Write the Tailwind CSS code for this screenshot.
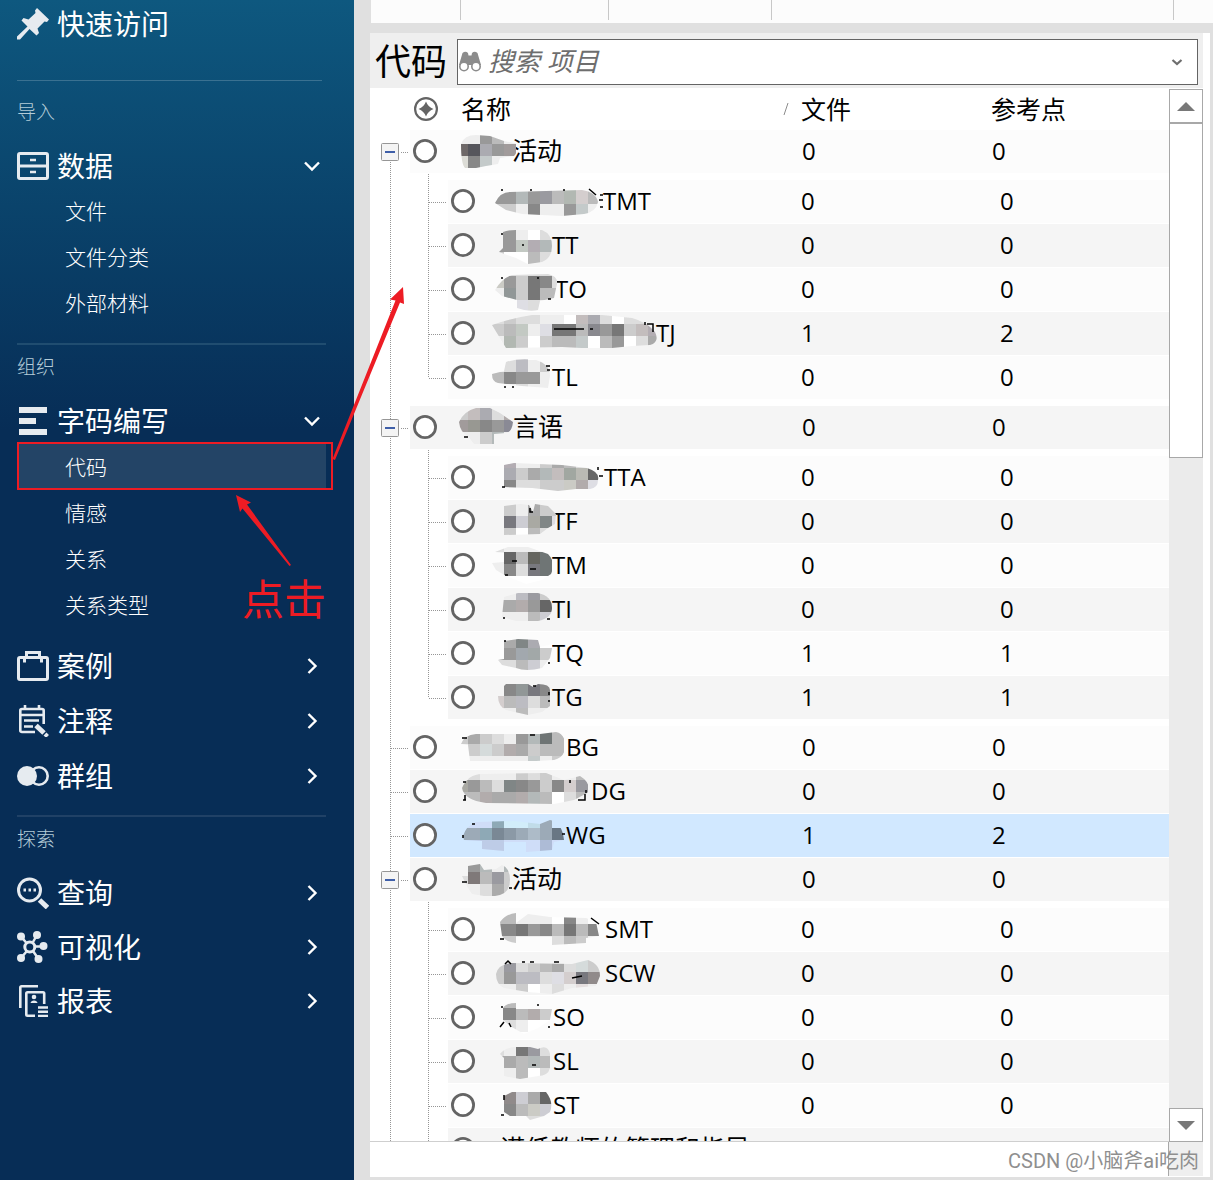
<!DOCTYPE html>
<html lang="zh-CN">
<head>
  <meta charset="UTF-8" />
  <meta name="viewport" content="width=device-width, initial-scale=1.0" />
  <title>代码</title>
  <script src="https://cdn.jsdelivr.net/npm/@tailwindcss/browser@4"></script>
</head>
<body class="relative flex h-screen overflow-hidden bg-[#e0e0e0] font-['Open_Sans','Noto_Sans_CJK_SC',sans-serif] text-black">

  <!-- Sidebar -->
  <aside class="w-[354px] shrink-0 bg-linear-to-b from-[#0e587f] to-[#072d56] to-[430px] pl-[17px] pr-7 text-white">
    <a href="#" class="flex h-12 items-center gap-2 text-[28px]">
      <svg class="size-8" viewBox="0 0 32 32" fill="#e6ebf0"><path d="M20 0 32 11.500 30 14 27.500 13.500 20.500 20.500 22 25 19.500 27.500 12.500 21 3 31.500H0V28.500L10.500 18.500 4.500 12.500 6.500 10 11.500 11.500 18.500 5 18 2.500Z"/></svg>
      快速访问
    </a>

    <hr class="mt-8 mr-1 border-[#3a7191]" />
    <h2 class="mt-[17px] h-7 text-[19px] leading-7 font-light text-[#b4ccd8]">导入</h2>
    <a href="#" class="mt-[17px] flex h-[45px] items-center gap-2 text-[28px]">
      <svg class="size-8" viewBox="0 0 32 32" fill="none" stroke="#e6ebf0" stroke-width="3"><rect x="1.500" y="3.500" width="29" height="25" rx="1.500"/><path d="M2 16H30"/><path d="M13 10h6M13 22h6" stroke-width="2.500"/></svg>
      <span class="flex-1">数据</span>
      <svg class="mr-1.5 size-4" viewBox="0 0 16 16" fill="none" stroke="white" stroke-width="2.400"><path d="M1 4.500 8 11.500 15 4.500"/></svg>
    </a>
    <ul class="text-[21px] leading-[46px] font-light text-white">
      <li><a href="#" class="block pl-12">文件</a></li>
      <li><a href="#" class="block pl-12">文件分类</a></li>
      <li><a href="#" class="block pl-12">外部材料</a></li>
    </ul>

    <hr class="mt-[17px] border-t-2 border-[#204d70]" />
    <h2 class="mt-2 h-7 text-[19px] leading-7 font-light text-[#b4ccd8]">组织</h2>
    <a href="#" class="mt-[17px] flex h-[46px] items-center gap-2 text-[28px]">
      <svg class="size-8" viewBox="0 0 32 32" fill="#e6ebf0"><path d="M2 2H30V8H2ZM2 13H19V19H2ZM2 24H30V30H2Z"/></svg>
      <span class="flex-1">字码编写</span>
      <svg class="mr-1.5 size-4" viewBox="0 0 16 16" fill="none" stroke="white" stroke-width="2.400"><path d="M1 4.500 8 11.500 15 4.500"/></svg>
    </a>
    <ul class="text-[21px] leading-[46px] font-light text-white">
      <li><a href="#" class="block bg-[#234466] pl-12">代码</a></li>
      <li><a href="#" class="block pl-12">情感</a></li>
      <li><a href="#" class="block pl-12">关系</a></li>
      <li><a href="#" class="block pl-12">关系类型</a></li>
    </ul>
    <div class="mt-2.5 text-[28px]">
      <a href="#" class="flex h-[55px] items-center gap-2">
        <svg class="size-8" viewBox="0 0 32 32" fill="none" stroke="#e6ebf0" stroke-width="3"><rect x="1.500" y="7.500" width="29" height="22" rx="1.500"/><path d="M7.500 12.500V9M24.500 12.500V9M9.500 7V2.500H22.500V7"/></svg>
        <span class="flex-1">案例</span>
        <svg class="mr-1.5 size-4" viewBox="0 0 16 16" fill="none" stroke="white" stroke-width="2.400"><path d="M4.500 1 11.500 8 4.500 15"/></svg>
      </a>
      <a href="#" class="flex h-[55px] items-center gap-2">
        <svg class="size-8" viewBox="0 0 32 32" fill="none" stroke="#e6ebf0" stroke-width="2.600"><path d="M18 27H5Q3.300 27 3.300 25.500V5.500Q3.300 4 5 4H25Q26.700 4 26.700 5.500V19M8 0V5M22 0V5M3 10H27M7 15.500H22M7 21.500H16"/><path d="M19 20.500 27 28" stroke-width="5"/><path d="M28 29 30.500 31.500" stroke-width="4"/></svg>
        <span class="flex-1">注释</span>
        <svg class="mr-1.5 size-4" viewBox="0 0 16 16" fill="none" stroke="white" stroke-width="2.400"><path d="M4.500 1 11.500 8 4.500 15"/></svg>
      </a>
      <a href="#" class="flex h-[55px] items-center gap-2">
        <svg class="size-8" viewBox="0 0 32 32"><circle cx="22" cy="16" r="8.700" fill="none" stroke="#e6ebf0" stroke-width="2.600"/><circle cx="10" cy="16" r="10" fill="#e6ebf0"/></svg>
        <span class="flex-1">群组</span>
        <svg class="mr-1.5 size-4" viewBox="0 0 16 16" fill="none" stroke="white" stroke-width="2.400"><path d="M4.500 1 11.500 8 4.500 15"/></svg>
      </a>
    </div>

    <hr class="mt-3 border-t-2 border-[#204166]" />
    <h2 class="mt-2 h-7 text-[19px] leading-7 font-light text-[#b4ccd8]">探索</h2>
    <div class="mt-[13px] text-[28px]">
      <a href="#" class="flex h-[54px] items-center gap-2">
        <svg class="size-8" viewBox="0 0 32 32" fill="none" stroke="#e6ebf0"><circle cx="12.500" cy="13" r="11" stroke-width="3"/><path d="M22.500 23 30.500 30.500" stroke-width="5"/><path d="M6.500 13H9M11.500 13H14M16.500 13H19" stroke-width="3"/></svg>
        <span class="flex-1">查询</span>
        <svg class="mr-1.5 size-4" viewBox="0 0 16 16" fill="none" stroke="white" stroke-width="2.400"><path d="M4.500 1 11.500 8 4.500 15"/></svg>
      </a>
      <a href="#" class="flex h-[54px] items-center gap-2">
        <svg class="size-8" viewBox="0 0 32 32" fill="#e6ebf0" stroke="#e6ebf0" stroke-width="2.500"><path d="M4 5.500 9.500 12M20 4 16 11M18 15.500H26M9.500 20.500 4 27M16 20 21.500 28" fill="none"/><g stroke="none"><circle cx="4" cy="5.500" r="4"/><circle cx="20" cy="4" r="4"/><circle cx="26.500" cy="15" r="4"/><circle cx="4" cy="27" r="4"/><circle cx="21.500" cy="28" r="4"/></g><circle cx="12.800" cy="16" r="5" fill="#072d56" stroke-width="3"/></svg>
        <span class="flex-1">可视化</span>
        <svg class="mr-1.5 size-4" viewBox="0 0 16 16" fill="none" stroke="white" stroke-width="2.400"><path d="M4.500 1 11.500 8 4.500 15"/></svg>
      </a>
      <a href="#" class="flex h-[54px] items-center gap-2">
        <svg class="size-8" viewBox="0 0 32 32" fill="none" stroke="#e6ebf0" stroke-width="2.600"><path d="M3.300 23V2.500Q3.300 1.300 4.500 1.300H21"/><path d="M18 30.700H10.500Q9.300 30.700 9.300 29.500V8.500Q9.300 7.300 10.500 7.300H26Q27.200 7.300 27.200 8.500V19"/><path d="M21 22.500H31M21 26.700H31M21 31H31" stroke-width="2.400"/><circle cx="17" cy="12" r="2.300" fill="#e6ebf0" stroke="none"/><path d="M13.500 18Q14 15.500 17 15.500T20.500 18Z" fill="#e6ebf0" stroke="none"/></svg>
        <span class="flex-1">报表</span>
        <svg class="mr-1.5 size-4" viewBox="0 0 16 16" fill="none" stroke="white" stroke-width="2.400"><path d="M4.500 1 11.500 8 4.500 15"/></svg>
      </a>
    </div>
  </aside>

  <!-- Content -->
  <main class="flex min-w-0 flex-1 flex-col pl-4">
    <div class="ml-px flex h-[23px] shrink-0 bg-[#fcfcfc]">
      <div class="h-5 w-[90px] border-r border-[#c8c8c8]"></div>
      <div class="h-5 w-[148px] border-r border-[#c8c8c8]"></div>
      <div class="h-5 w-[163px] border-r border-[#c8c8c8]"></div>
      <div class="mr-[39px] h-5 flex-1 border-r border-[#c8c8c8]"></div>
    </div>

    <section class="mt-2.5 mr-[3px] mb-[3px] flex min-h-0 flex-1 flex-col bg-white pr-[7px]">
      <div class="flex h-[55px] shrink-0 items-center gap-[9px] bg-[#efefef] px-[5px] pt-0.5">
        <label for="search" class="w-[73px] text-[36px] leading-none whitespace-nowrap">代码</label>
        <div class="flex h-[46px] flex-1 items-center border border-[#646464] bg-white pr-3.5 pl-px">
          <svg class="h-[22px] w-[22px]" viewBox="0 0 22 22" fill="#8c8c8c"><path d="M3.500 2Q6.500-0.500 9 2L9.500 4.500H12.500L13 2Q15.500-0.500 18.500 2L22 14H0Z"/><circle cx="5" cy="15.500" r="4.200" fill="white" stroke="#8c8c8c" stroke-width="1.600"/><circle cx="17" cy="15.500" r="4.200" fill="white" stroke="#8c8c8c" stroke-width="1.600"/></svg>
          <input id="search" type="text" placeholder="搜索 项目" class="ml-[7px] min-w-0 flex-1 text-[26px] italic outline-none placeholder:text-[#6e6e6e]" />
          <button type="button" aria-label="展开">
            <svg class="size-3" viewBox="0 0 12 12" fill="none" stroke="#6e6e6e" stroke-width="2.200"><path d="M1.500 4 6 8 10.500 4"/></svg>
          </button>
        </div>
      </div>

      <div class="flex min-h-0 flex-1">
        <div class="min-w-0 flex-1 overflow-hidden border-b border-[#cfcfcf]">
          <table class="w-full table-fixed border-collapse text-left text-[25px] leading-none">
            <colgroup>
              <col class="w-[431px]" />
              <col class="w-[190px]" />
              <col />
            </colgroup>
            <thead>
              <tr class="h-[42px]">
                <th class="p-0 font-normal">
                  <div class="flex items-center pr-3 pl-11">
                    <svg class="size-6" viewBox="0 0 24 24"><circle cx="12" cy="12" r="10.900" fill="none" stroke="#646464" stroke-width="2.200"/><path d="M12 4.500Q14 10 19.500 12 14 14 12 19.500 10 14 4.500 12 10 10 12 4.500Z" fill="#646464"/></svg>
                    <span class="ml-[23px] flex-1">名称</span>
                    <svg class="h-3 w-1.5" viewBox="0 0 6 12" stroke="#8c8c8c"><path d="M1 12 5 0"/></svg>
                  </div>
                </th>
                <th class="p-0 font-normal">文件</th>
                <th class="p-0 font-normal">参考点</th>
              </tr>
            </thead>
            <tbody id="codeRows"></tbody>
          </table>
        </div>

        <!-- Scrollbar -->
        <div class="flex w-[34px] flex-col pt-px">
          <div class="flex min-h-0 flex-1 flex-col bg-[#ebebeb]">
            <button type="button" aria-label="向上" class="flex h-[34px] shrink-0 items-center justify-center border border-[#a8a8a8] bg-white">
              <svg class="h-[9px] w-[18px]" viewBox="0 0 18 9" fill="#787878"><path d="M9 0 18 9H0Z"/></svg>
            </button>
            <div class="h-[335px] border border-[#a8a8a8] bg-white"></div>
            <button type="button" aria-label="向下" class="mt-auto flex h-[34px] shrink-0 items-center justify-center border border-[#a8a8a8] bg-white">
              <svg class="h-[9px] w-[18px]" viewBox="0 0 18 9" fill="#787878"><path d="M0 0H18L9 9Z"/></svg>
            </button>
          </div>
        </div>
      </div>
      <div class="flex h-[35px] shrink-0 justify-end">
        <div class="mb-px w-[35px] border-l border-[#a8a8a8] bg-[#efefef]"></div>
      </div>
    </section>
  </main>

  <!-- Annotations -->
  <div class="absolute top-[442px] left-[17px] h-12 w-[316px] border-2 border-[#ed1c24]"></div>
  <svg class="pointer-events-none absolute top-0 left-0 h-[600px] w-[420px]" viewBox="0 0 420 600" fill="#ed1c24">
    <path d="M403 287 404 304 400 302.500 335 460 332.500 459 395.500 300.500 390 299.500Z"/>
    <path d="M236 495 251 502.500 247 504.500 291 565 289.500 566 242.500 508.500 240 512Z"/>
  </svg>
  <p class="absolute top-[577px] left-[242px] text-[42px] leading-[44px] text-[#ed1c24]">点击</p>
  <p class="absolute right-3.5 bottom-1 font-['Roboto','Noto_Sans_CJK_SC',sans-serif] text-[20px] leading-[30px] text-[#8f8f8f]">CSDN @小脑斧ai吃肉</p>

  <script>
    // w: width of the blurred part, clip: its outline, marks: ink left visible around it
    // y: top of the first line of 12px cells, cells: one string per line
    const codes = [
      { level: 0, text: '活动', files: 0, refs: 0, parent: true, first: true, w: 56, y: 2,
        clip: 'M5 14Q8 5 20 5L34 6 48 11 62 14Q62 22 58 26L44 28 42 34 30 36 20 38H9Q5 34 5 14Z',
        cells: ['eee eee 999 bbb eee', '766 556 aab 999 a99', 'ddc 888 bcc eee eee'] },
      { level: 1, text: 'TMT', files: 0, refs: 0, w: 111, y: 0,
        clip: 'M3 23Q8 12 18 12L90 10Q104 12 106 22 104 32 92 34L70 36 30 34 14 30Z',
        marks: 'M9 10h2M38 10h2M71 10h2M97 9 104 15M108 15h3M107 20h4M108 27h3',
        cells: ['999 999 abb 999 99a bbb aba dcc bbb', '999 999 abb 999 99a bbb aba dcc bbb', 'ccc ccc eee 888 eee eee 999 bcc eee'] },
      { level: 1, text: 'TT', files: 0, refs: 0, w: 60, y: 4,
        clip: 'M11 8Q16 6 24 6L50 6Q60 10 60 22 60 34 50 38L36 40 24 34 7 28 11 24Z',
        marks: 'M9 10h2M30 21h2',
        cells: ['999 999 eee fff ddd', '999 999 bcb bab abb', 'ccc fff fff bbb ddd'] },
      { level: 1, text: 'TO', files: 0, refs: 0, w: 63, y: -4,
        clip: 'M3 22Q10 10 20 7L56 6Q66 8 65 16L62 30 48 33 46 42Q36 44 25 40V32L10 28Z',
        marks: 'M9 10h2M45 10h2M56 31h3',
        cells: ['ddd ddd ddd ddd ddd eee', 'ccb 999 ccc 777 888 ddd', 'eee 899 ccc 777 bbb bbb', 'eee eee dde ddd eee eee'] },
      { level: 1, text: 'TJ', files: 1, refs: 2, w: 164, y: 0,
        clip: 'M0 13Q20 6 40 3H110L140 6Q155 10 163 20 168 30 158 33L140 34 110 37 70 35 14 36Z',
        marks: 'M62 17H92M98 17H101M153 10V13M155 12H161V20',
        cells: ['ddd ccc ddd ddd eee eee fff cbb aab ddd fff ddd ddd', 'ccc bbb bcb eee dde 777 777 bbb 889 999 777 ccc cbb bab', 'eee aba ccc fff ccc bbb bbb bcc fff bbb 999 fff ddd aaa'] },
      { level: 1, text: 'TL', files: 0, refs: 0, last: true, w: 60, y: -8,
        clip: 'M0 18 12 15 14 6Q26 2 44 4 58 8 58 20L56 32 30 30 6 27Q0 26 0 18Z',
        marks: 'M12 31h2M20 31h2M54 10h4M55 14h3',
        cells: ['eee ddd bbc fff ddd', 'eee ddd bbc eee ccc', 'bbb 888 999 999 eee', 'fff eee ddd eee eee'] },
      { level: 0, text: '言语', files: 0, refs: 0, parent: true, w: 57, y: 2,
        clip: 'M3 16Q8 5 20 2L34 2 44 7 57 16Q56 26 50 27L38 28V38H18L12 30Q4 26 3 16Z',
        marks: 'M8 31h4',
        cells: ['ccc cbb aab ddd baa eee', 'a99 998 888 999 88a bbb', 'eee eee ccc abb eee eee'] },
      { level: 1, text: 'TTA', files: 0, refs: 0, w: 112, y: 0,
        clip: 'M12 9 22 7 70 9 95 12Q108 16 106 24 106 32 98 33L84 33 66 35 40 32 12 31Z',
        marks: 'M10 31h3M106 11v3M107 20h4',
        cells: ['bbb bab eee eee ccc aaa bbb ddd eee', 'aab aab ccc aaa abb cbb 9a9 bba 666', '888 888 ddd ddd ccc ccc ccb baa dde'] },
      { level: 1, text: 'TF', files: 0, refs: 0, w: 60, y: 4,
        clip: 'M12 6 28 4 37 5 41 12 43 4 56 6 64 14 63 24 56 28 48 34 12 35Z',
        marks: 'M38 8v4h3',
        cells: ['ccc ccc eee aaa ccc ccc', '778 778 ccd aa9 788 dde', 'ccc ccc fff bbb ddd eee'] },
      { level: 1, text: 'TM', files: 0, refs: 0, w: 60, y: -4,
        clip: 'M3 8 16 3 36 3 56 10Q64 18 59 30L50 36 34 40 14 32 4 26 0 19 12 18V9Z',
        marks: 'M20 17h5M13 31h3M38 25h6',
        cells: ['ddd eee eee eee eee', 'eee 666 bbb 665 677', 'eee 888 ddd 778 677', 'fff fff fff fff fff'] },
      { level: 1, text: 'TI', files: 0, refs: 0, w: 60, y: 0,
        clip: 'M12 9 26 5 46 5Q60 8 60 20 60 30 46 33L24 33 10 29Z',
        marks: 'M11 30h2M55 31h3',
        cells: ['eee eee bbc 99a ccc', 'aaa aaa baa 999 666', 'eee eee eee bbb ccd'] },
      { level: 1, text: 'TQ', files: 1, refs: 1, w: 60, y: -8,
        clip: 'M12 9 26 7 46 8 48 15 61 12 58 26 50 36Q34 40 24 36L10 33 6 28 12 27Z',
        marks: 'M12 9h2M56 31h2',
        cells: ['aaa aaa 788 abb eee', 'aaa aaa 788 aab fff', '999 999 9ab 9aa ccc', 'ddd ddd bbb ccd eee'] },
      { level: 1, text: 'TG', files: 1, refs: 1, last: true, w: 60, y: -4,
        clip: 'M12 10 14 8H36L41 11 46 8Q58 8 58 14V30L50 36 36 39 14 34Q6 30 6 20H12Z',
        marks: 'M41 10h3M57 16v3M57 24v2',
        cells: ['888 888 899 778 888', '888 888 899 778 888', 'dcc bbb bbc ddd bbb', 'eee eee bbb eee eee'] },
      { level: 0, text: 'BG', files: 0, refs: 0, first: true, w: 110, y: 6,
        clip: 'M5 18Q8 9 20 8H84L100 6Q110 8 109 22 108 32 98 34L80 35H14L12 19Z',
        marks: 'M6 12h5M74 9h5',
        cells: ['ccc aaa ccc ddd eee 999 abb 677 bbb', 'eee ccc cdd ccc baa aaa ccc bbb bbb', 'eee eee eee eee eee eee bcc eee ccc'] },
      { level: 0, text: 'DG', files: 0, refs: 0, w: 135, y: -2,
        clip: 'M6 18Q12 4 26 4L90 3 108 10 124 6Q134 12 133 22L118 30 98 34 30 33Q8 30 6 18Z',
        marks: 'M7 12h3M7 30h3M9 25v5M114 10v3M122 30h7V24M130 20v3',
        cells: ['eee ddd eee eee eee ccc ddd ccc eee eee bbb', 'aa9 999 bbb ddd 788 888 999 ccc 888 dcc 99a', 'bbb bbb baa aaa aaa baa abb bbb fff ddd bbb'] },
      { level: 0, text: 'WG', files: 1, refs: 2, selected: true, w: 110, y: 2,
        clip: 'M7 22Q10 12 20 8L58 7 84 10 94 6Q106 8 108 26L98 28 96 36 70 38V28H48V37L26 35V27L8 26Z',
        marks: 'M7 21v3M16 10h3M106 20h3',
        cells: ['bde cdf cdf 8ab cef cef bde 9ab', '9ab 9ab 8ab 789 89a 9ab abc 9ab 678', 'bce bce bce bce cdf cdf cdf abd cdf'] },
      { level: 0, text: '活动', files: 0, refs: 0, parent: true, w: 56, y: 2,
        clip: 'M12 8 24 6 28 12 40 11 46 7Q54 10 54 22 54 34 44 37L34 39 16 36 12 30 6 18 12 18Z',
        marks: 'M6 24h5M53 30h3',
        cells: ['999 999 abb eee abb', 'ddd 877 bbb 99a ccc', 'eee eee ddd aaa ccc'] },
      { level: 1, text: 'SMT', files: 0, refs: 0, w: 113, y: 4,
        clip: 'M8 14Q14 6 24 5V15L36 6 58 9 94 10 104 14 107 28 94 30V35L60 37V29H24V35Q14 34 10 28Z',
        marks: 'M8 31h4M99 10 107 16',
        cells: ['bbb bbb eee eee eee fff 888 eee', '888 888 777 999 888 bbb 777 bbb 888', 'ccc ccc eee eee eee ddd bbb ccc eee'] },
      { level: 1, text: 'SCW', files: 0, refs: 0, w: 113, y: -4,
        clip: 'M4 22Q6 12 20 11L80 12 96 8Q108 12 108 24L104 34 80 36 60 42 36 40 12 36Q4 32 4 22Z',
        marks: 'M13 12 16 9 19 12M30 10h3M38 10h4M62 10h5M80 26 90 24',
        cells: ['ccc 99a ddd ccc bbb aaa ddd cdd ccc', 'ccc 99a ddd ccc bbb aaa ddd cdd ccc', 'ccc 999 bbc bbc ddd dde dcc 778 988', 'eee eee ccc fff eee ddd eee edd eee'] },
      { level: 1, text: 'SO', files: 0, refs: 0, w: 61, y: 0,
        clip: 'M11 12Q14 7 24 7V13H60L58 24 46 32 32 38 18 30 11 24Z',
        marks: 'M9 11h2M8 31 12 26M17 27 19 31M45 9h2M56 31h2',
        cells: ['bbb bbb eee eee eee', '888 888 bbb baa ccc', 'ddd ddd eee fff fff', 'fff fff fff fff fff'] },
      { level: 1, text: 'SL', files: 0, refs: 0, w: 61, y: -8,
        clip: 'M8 14Q12 8 22 7L38 7 46 9Q56 4 58 14V28Q56 36 46 36L28 39 12 36V18Z',
        marks: 'M40 25h4',
        cells: ['ddd ddd 777 99a ddd', 'ddd eee 777 99a ddd', 'aaa aaa bbb abb bbb', 'eee eee bbb fff ddd'] },
      { level: 1, text: 'ST', files: 0, refs: 0, w: 61, y: -4,
        clip: 'M12 12 20 8H54Q62 18 58 28L52 32 38 36 34 32H18L12 28Z',
        marks: 'M12 11v5M9 31h3',
        cells: ['eee eee eee eee eee', '988 988 ccd aaa 666', '888 888 bbb ccb ccd', 'ddd ddd ddd ddd ddd'] },
      { level: 1, text: '谨低教师的管理和指导SF', files: 0, refs: 0, w: 8, y: 0, clip: '', cells: [] },
    ];

    const ring = '<svg class="size-6 shrink-0" viewBox="0 0 24 24"><circle cx="12" cy="12" r="10.600" fill="white" stroke="#646464" stroke-width="2.800"/></svg>';

    function mosaic(row, i) {
      let rects = '';
      row.cells.forEach((line, r) => line.split(' ').forEach((c, k) => {
        rects += `<rect x="${k * 12}" y="${row.y + r * 12}" width="12" height="12" fill="#${c}"/>`;
      }));
      const tone = row.selected ? 'saturate-80' : 'saturate-[.35]';
      return `<svg class="h-[41px] shrink-0 overflow-visible ${tone}" width="${row.w}">
        <clipPath id="clip${i}"><path d="${row.clip}"/></clipPath>
        <g clip-path="url(#clip${i})" shape-rendering="crispEdges">${rects}</g>
        <path d="${row.marks || ''}" fill="none" stroke="black" stroke-width="1.500"/></svg>`;
    }

    // Tree lines to the left of a row
    function gutter(row) {
      const dots = 'fill="none" stroke="#969696" stroke-dasharray="1 1"';
      let s = `<svg class="h-11 w-10 shrink-0" viewBox="0 0 40 44"><path d="M20.500 0V44${row.level ? '' : 'M21 22.500H38'}" ${dots}/>`;
      if (row.parent) {
        s += (row.first ? '<path d="M20 0H21V14H20Z" fill="white"/>' : '') +
          '<rect x="11.500" y="13.500" width="17" height="17" rx="1" fill="#f4f4f4" stroke="#969696"/><path d="M15 22H25" stroke="#3f5fa8" stroke-width="2"/><path d="M29 22.500H31" stroke="white"/>';
      }
      s += '</svg>';
      if (row.level) {
        s += `<svg class="h-11 w-[38px] shrink-0" viewBox="0 0 38 44"><path d="M18.500 0V${row.last ? 22 : 44}M19 22.500H36" ${dots}/></svg>`;
      }
      return s;
    }

    function spacer(inner) {
      return `<tr class="h-1.5"><td class="p-0" colspan="3"><svg class="block h-1.5 w-20" viewBox="0 0 80 6"><path d="M20.500 0V6${inner ? 'M58.500 0V6' : ''}" stroke="#969696" stroke-dasharray="1 1"/></svg></td></tr>`;
    }

    let html = '';
    let stripe = 0;
    codes.forEach((row, i) => {
      const bg = row.selected ? 'bg-[#d1e8ff]' : (row.parent && !row.first) || stripe % 2 ? 'bg-[#f5f5f5]' : 'bg-[#fcfcfc]';
      const label = row.text.replace(/[A-Z]+/, '<span class="text-[24px]">$&</span>');
      stripe++;
      html += `<tr class="h-11">
        <td class="p-0"><div class="flex h-11">${gutter(row)}
          <div class="flex h-[43px] min-w-0 flex-1 items-center whitespace-nowrap ${bg} pb-0.5 pl-[3px]">${ring}
            <div class="${row.level ? 'ml-[17px]' : 'ml-[19px]'} flex items-center">${mosaic(row, i)}<span>${label}</span></div>
          </div></div></td>
        <td class="p-0"><div class="mb-px flex h-[43px] items-center pb-0.5 text-[24px] ${bg} ${row.level ? '' : 'pl-px'}">${row.files}</div></td>
        <td class="p-0"><div class="mb-px flex h-[43px] items-center pb-0.5 text-[24px] ${bg} ${row.level ? 'pl-[9px]' : 'pl-px'}">${row.refs}</div></td>
      </tr>`;
      if (row.parent) { html += spacer(true); stripe = 0; }
      if (row.last) { html += spacer(false); stripe = 0; }
    });
    document.getElementById('codeRows').innerHTML = html;
  </script>
</body>
</html>
